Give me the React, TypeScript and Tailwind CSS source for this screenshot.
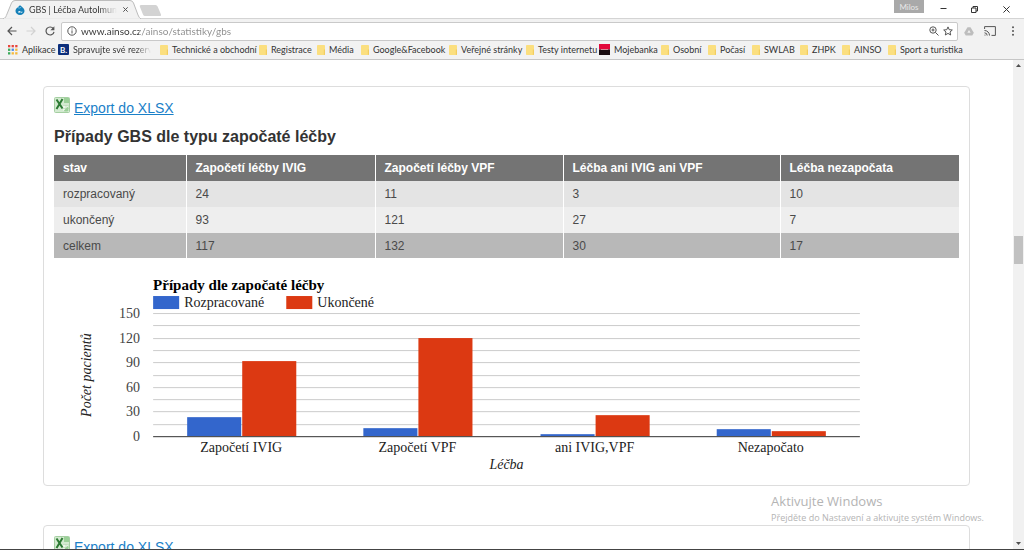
import React from "react";

const UI = "font-['Open_Sans','Noto_Sans',sans-serif]";
const BAR = "font-['Lato','Open_Sans',sans-serif]";

const bookmarks = [
  { label: "Aplikace", kind: "apps", width: "w-[50px]" },
  { label: "Spravujte své rezervace", kind: "booking", width: "w-[102px]" },
  { label: "Technické a obchodní", kind: "folder", width: "w-[99px]" },
  { label: "Registrace", kind: "folder", width: "w-[58px]" },
  { label: "Média", kind: "folder", width: "w-[44px]" },
  { label: "Google&Facebook", kind: "folder", width: "w-[88px]" },
  { label: "Veřejné stránky", kind: "folder", width: "w-[77px]" },
  { label: "Testy internetu", kind: "folder", width: "w-[73px]" },
  { label: "Mojebanka", kind: "bank", width: "w-[62px]" },
  { label: "Osobní", kind: "folder", width: "w-[47px]" },
  { label: "Počasí", kind: "folder", width: "w-[44px]" },
  { label: "SWLAB", kind: "folder", width: "w-[48px]" },
  { label: "ZHPK", kind: "folder", width: "w-[42px]" },
  { label: "AINSO", kind: "folder", width: "w-[46px]" },
  { label: "Sport a turistika", kind: "folder", width: "w-[80px]" },
];

function BookmarkIcon({ kind }: { kind: string }) {
  if (kind === "apps") {
    const colors = ["#e8453c", "#e8453c", "#e8453c", "#3cab5b", "#4a86e8", "#f5b93a", "#3cab5b", "#f5b93a", "#f5b93a"];
    return (
      <svg className="size-[10px] shrink-0" viewBox="0 0 10 10" aria-hidden="true">
        {colors.map((c, i) => (
          <rect key={i} x={(i % 3) * 3.6} y={Math.floor(i / 3) * 3.6} width="2.3" height="2.3" fill={c} />
        ))}
      </svg>
    );
  }
  if (kind === "booking") {
    return (
      <span className="flex size-[11px] shrink-0 items-center justify-center rounded-[1px] bg-[#0c2f7c] text-[8px] leading-none font-bold text-white">
        B.
      </span>
    );
  }
  if (kind === "bank") {
    return (
      <svg className="size-[11px] shrink-0" viewBox="0 0 11 11" aria-hidden="true">
        <rect width="11" height="5.5" fill="#e2093b" />
        <rect y="5.5" width="11" height="5.5" fill="#1a0d10" />
        <rect x="2" y="5" width="7" height="1" fill="#d98a98" />
      </svg>
    );
  }
  return (
    <svg className="h-[10px] w-2 shrink-0" viewBox="0 0 8 10" aria-hidden="true">
      <rect width="8" height="10" rx="0.8" fill="#fbdf7f" />
      <path d="M6.8 4.5H8V9.2Q8 10 7.2 10H6.8Z" fill="#f2cd60" />
    </svg>
  );
}

function Browser() {
  return (
    <header className={`shrink-0 text-[#333] ${BAR}`}>
      <div className="flex h-[19px] items-start justify-between border-b border-[#d4d4d4] bg-white">
        <div className="flex items-start">
          <div className="relative -mb-px ml-[3px] flex h-[19px] w-[138px] items-center pr-[10px] pl-3">
            <svg className="absolute inset-0 size-full" viewBox="0 0 138 19" preserveAspectRatio="none" aria-hidden="true">
              <path d="M0 19C3 18 3 16 4 14L8.500 3Q9.500 0.500 12 0.500H127Q129.500 0.500 130.500 3L135 15Q136 18 138 19Z" fill="#f2f2f2" stroke="#bcbcbc" strokeWidth="1" />
              <path d="M1 19H137" stroke="#f2f2f2" strokeWidth="1.500" />
            </svg>
            <svg className="relative mt-px size-[10px] shrink-0" viewBox="0 0 10 10" aria-hidden="true">
              <path d="M5 0C5.500 1.300 9.500 2.500 9.500 6A4.500 4 0 0 1 .5 6C.5 3 4 2 5 0Z" fill="#1580b8" />
              <path d="M3.500 6.200C5 5.400 5.500 7.400 7.600 6.600C7.500 8.400 6 7.800 5.300 7.300C4 8.300 2.700 7.600 3.500 6.200Z" fill="#e6f3fa" />
              <path d="M3 2.700Q4.300 3.700 6.200 2.300" stroke="#6bb8df" fill="none" />
            </svg>
            <span className="relative ml-1 w-[88px] overflow-hidden bg-linear-to-r from-[#333] from-80% to-transparent bg-clip-text text-[9px] leading-3 whitespace-nowrap text-transparent">
              GBS | Léčba AutoImunitních
            </span>
            <button aria-label="Zavřít kartu" className="relative ml-[6px] shrink-0">
              <svg className="size-[5px]" viewBox="0 0 5 5"><path d="M.3.3L4.700 4.700M4.700.3L.3 4.700" stroke="#555" /></svg>
            </button>
          </div>
          <button aria-label="Nová karta" className="mt-[5px] -ml-[2px]">
            <svg className="block h-[11px] w-[23px]" viewBox="0 0 23 11">
              <path d="M2 0H16.500Q18 0 18.600 1.500L22 9.500Q22.500 11 21 11H6Q4.600 11 4 9.500L.8 1.500Q.4 0 2 0Z" fill="#d3d3d3" />
            </svg>
          </button>
        </div>
        <div className="flex items-start">
          <button className="h-[13px] w-[30px] bg-[#a9a9a9] text-[8px] leading-3 text-[#e8e8e8]">Milos</button>
          <button aria-label="Minimalizovat" className="mt-[6px] ml-4">
            <svg className="block size-[7px]" viewBox="0 0 7 7"><path d="M.5 2.500H6.500" stroke="#333" /></svg>
          </button>
          <button aria-label="Obnovit" className="mt-[6px] ml-6">
            <svg className="block size-[7px]" viewBox="0 0 7 7" fill="none" stroke="#333"><path d="M.5 2H5V6.500H.5ZM2 2V.5H6.500V5H5" /></svg>
          </button>
          <button aria-label="Zavřít" className="mt-[6px] mr-[14px] ml-[25px]">
            <svg className="block size-[7px]" viewBox="0 0 7 7"><path d="M.4.4L6.600 6.600M6.600.4L.4 6.600" stroke="#333" /></svg>
          </button>
        </div>
      </div>

      <div className="flex h-[23px] items-center bg-[#f2f2f2] pt-px pr-[9px] pl-[7px]">
        <button aria-label="Zpět">
          <svg className="block size-[10px]" viewBox="0 0 10 10" fill="none" stroke="#555" strokeWidth="1.200"><path d="M9.500 5H1.200M5 1L1 5L5 9" /></svg>
        </button>
        <button aria-label="Vpřed" className="ml-[9px]">
          <svg className="block size-[10px]" viewBox="0 0 10 10" fill="none" stroke="#d2d2d2" strokeWidth="1.200"><path d="M.5 5H8.800M5 1L9 5L5 9" /></svg>
        </button>
        <button aria-label="Obnovit stránku" className="mr-[6px] ml-[9px]">
          <svg className="block size-[10px]" viewBox="0 0 10 10" fill="none" stroke="#555" strokeWidth="1.200"><path d="M8.300 2.600A4 4 0 1 0 9 5.800" /><path d="M9.400.3V4.300H5.400Z" fill="#555" stroke="none" /></svg>
        </button>
        <div className="flex h-[19px] min-w-0 flex-1 items-center rounded-[2px] border border-[#c9c9c9] bg-white pr-1 pl-[5px]">
          <svg className="size-[10px] shrink-0" viewBox="0 0 10 10" fill="none" stroke="#555" aria-hidden="true"><circle cx="5" cy="5" r="4.200" /><path d="M5 4.400V7.500M5 2.500V3.500" /></svg>
          <input
            aria-label="Adresa"
            readOnly
            value="www.ainso.cz/ainso/statistiky/gbs"
            className="ml-1 h-4 min-w-0 flex-1 bg-linear-to-r from-[#333] from-[58px] to-[#8c8c8c] to-[58px] bg-clip-text text-[10px] leading-4 text-transparent outline-none"
          />
          <button aria-label="Lupa">
            <svg className="block size-[10px]" viewBox="0 0 10 10" fill="none" stroke="#555"><circle cx="4" cy="4" r="3.200" /><path d="M6.400 6.400L9.500 9.500M2.500 4H5.500M4 2.500V5.500" /></svg>
          </button>
          <button aria-label="Přidat záložku" className="ml-1">
            <svg className="block size-[10px]" viewBox="0 0 10 10" fill="none" stroke="#555"><path d="M5 .9L6.200 3.700L9.300 4L7 6L7.700 9L5 7.400L2.300 9L3 6L.7 4L3.800 3.700Z" /></svg>
          </button>
        </div>
        <button aria-label="Disk" className="ml-[6px]">
          <svg className="block h-[9px] w-[10px]" viewBox="0 0 10 9"><path d="M3.500.3H6.500L9.800 5.800L8.300 8.500H1.700L.2 5.800Z" fill="#bdbdbd" /><path d="M5 3L6.600 5.800H3.400Z" fill="#f2f2f2" /></svg>
        </button>
        <button aria-label="Odeslat" className="ml-[10px]">
          <svg className="block h-[10px] w-3" viewBox="0 0 12 10" fill="none" stroke="#555"><path d="M.6 3V.6H11.400V9.400H7.500M.5 4.500A5 5 0 0 1 5.500 9.500M.5 6.800A2.800 2.800 0 0 1 3.200 9.500" /><circle cx="1" cy="9" r=".6" fill="#555" stroke="none" /></svg>
        </button>
        <button aria-label="Nabídka" className="ml-auto pl-[15px]">
          <svg className="block h-[10px] w-1" viewBox="0 0 4 10" fill="#555"><circle cx="2" cy="1.300" r="1" /><circle cx="2" cy="5" r="1" /><circle cx="2" cy="8.700" r="1" /></svg>
        </button>
      </div>

      <nav className="flex h-[18px] items-center overflow-hidden border-b border-[#c6c6c6] bg-[#f2f2f2] pb-[2px] pl-2">
        {bookmarks.map((b) => (
          <a key={b.label} href="#" className={`flex shrink-0 items-center whitespace-nowrap ${b.width}`}>
            <BookmarkIcon kind={b.kind} />
            <span className={b.kind === "booking"
              ? "ml-1 w-[78px] overflow-hidden bg-linear-to-r from-[#333] from-80% to-transparent bg-clip-text text-[9px] leading-3 text-transparent"
              : "ml-1 text-[9px] leading-3"}>
              {b.label}
            </span>
          </a>
        ))}
      </nav>
    </header>
  );
}

function ExportLink() {
  return (
    <a href="#" className="flex h-[22px] items-start text-[14px] leading-[22px] text-[#1a80c8]">
      <svg className="mr-1 size-4 shrink-0" viewBox="0 0 16 16" aria-hidden="true">
        <rect x=".5" y=".5" width="15" height="15" rx="1" fill="#d3ead0" stroke="#a5cfa2" />
        <path d="M10 1H15V6H10Z" fill="#9bd098" />
        <path d="M9 8H15V15H9Z" fill="#eef7ec" />
        <path d="M9 8.500H15M9 11.500H15M12 8V15" stroke="#b5d9b2" strokeWidth=".7" />
        <path d="M2.500 2.500L8.500 11.500M8.500 2L2.500 12" stroke="#2c7a33" strokeWidth="2" />
        <path d="M9 14.500L14.500 9V14.500Z" fill="#9bd098" />
      </svg>
      <span className="underline">Export do XLSX</span>
    </a>
  );
}

const columns = ["stav", "Započetí léčby IVIG", "Započetí léčby VPF", "Léčba ani IVIG ani VPF", "Léčba nezapočata"];
const rows = [
  { cells: ["rozpracovaný", "24", "11", "3", "10"], tone: "bg-[#e4e4e4]" },
  { cells: ["ukončený", "93", "121", "27", "7"], tone: "bg-[#eeeeee]" },
  { cells: ["celkem", "117", "132", "30", "17"], tone: "bg-[#b8b8b8]" },
];

function StatsTable() {
  return (
    <table className="w-full table-fixed border-collapse text-left text-[12px] leading-4 text-[#4a4a4a]">
      <colgroup>
        <col className="w-[132px]" />
        <col className="w-[189px]" />
        <col className="w-[188px]" />
        <col className="w-[217px]" />
        <col />
      </colgroup>
      <thead>
        <tr className="h-[26px] bg-[#747474] text-white">
          {columns.map((c) => (
            <th key={c} scope="col" className="border-r border-white px-2 pl-[9px] last:border-r-0">{c}</th>
          ))}
        </tr>
      </thead>
      <tbody>
        {rows.map((r) => (
          <tr key={r.cells[0]} className={`h-[26px] last:h-[25px] ${r.tone}`}>
            {r.cells.map((c, i) => (
              <td key={i} className="border-r border-white px-2 pl-[9px] last:border-r-0">{c}</td>
            ))}
          </tr>
        ))}
      </tbody>
    </table>
  );
}

const series = [
  { label: "Započetí IVIG", values: [24, 93] },
  { label: "Započetí VPF", values: [11, 121] },
  { label: "ani IVIG,VPF", values: [3, 27] },
  { label: "Nezapočato", values: [10, 7] },
];
const fills = ["#3366cc", "#dc3912"];
const base = 168;
const scale = (v: number) => (v * 123) / 150;

function Chart() {
  return (
    <svg
      className="mt-[10px] block w-full font-['Georgia','Liberation_Serif',serif] text-[14px]"
      viewBox="0 0 904 207"
      role="img"
      aria-label="Případy dle započaté léčby"
    >
      <text x="99" y="22" className="text-[15px] font-bold" fill="#000">Případy dle započaté léčby</text>
      <rect x="99" y="28" width="26" height="13" fill="#3366cc" />
      <text x="130" y="39" fill="#222">Rozpracované</text>
      <rect x="232" y="28" width="26" height="13" fill="#dc3912" />
      <text x="263" y="39" fill="#222">Ukončené</text>
      {Array.from({ length: 10 }, (_, i) => (
        <rect key={i} x="99" y={Math.round(base - scale((i + 1) * 15))} width="706" height="1" fill="#ccc" />
      ))}
      {[0, 30, 60, 90, 120, 150].map((v) => (
        <text key={v} x="86" y={Math.round(base - scale(v)) + 5} textAnchor="end" fill="#444">{v}</text>
      ))}
      {series.map((s, i) => {
        const x = 133 + Math.floor(i * 176.5);
        return (
          <g key={s.label}>
            {s.values.map((v, j) => {
              const h = Math.round(scale(v - 1));
              return <rect key={j} x={x + j * 55} y={base - h} width="54" height={h} fill={fills[j]} />;
            })}
            <text x={x + 54} y="184" textAnchor="middle" fill="#222">{s.label}</text>
          </g>
        );
      })}
      <rect x="99" y={base} width="706" height="1" fill="#333" />
      <text x="452" y="201" textAnchor="middle" fontStyle="italic" fill="#222">Léčba</text>
      <text transform="translate(37 107) rotate(-90)" textAnchor="middle" fontStyle="italic" fill="#222">Počet pacientů</text>
    </svg>
  );
}

export default function App() {
  return (
    <div className="relative flex h-screen flex-col overflow-hidden border-b border-[#444] bg-white font-['Liberation_Sans',Arial,sans-serif]">
      <Browser />
      <div className="flex min-h-0 flex-1">
        <main className="flex min-w-0 flex-1 flex-col gap-[39px] overflow-hidden px-[43px] pt-[26px]">
          <section className="shrink-0 rounded border border-[#ddd] p-[10px]">
            <ExportLink />
            <h2 className="my-[6px] text-[16px] leading-6 font-bold text-[#333]">Případy GBS dle typu započaté léčby</h2>
            <StatsTable />
            <Chart />
          </section>
          <section className="shrink-0 rounded border border-[#ddd] p-[10px]">
            <ExportLink />
          </section>
        </main>
        <div className="flex w-[11px] shrink-0 flex-col items-center justify-between bg-[#f1f1f1] py-1" aria-hidden="true">
          <svg className="h-[3px] w-[5px]" viewBox="0 0 5 3"><path d="M0 3L2.500 0L5 3Z" fill="#505050" /></svg>
          <div className="mt-[169px] mb-auto h-[28px] w-[9px] bg-[#c1c1c1]" />
          <svg className="h-[3px] w-[5px]" viewBox="0 0 5 3"><path d="M0 0L2.500 3L5 0Z" fill="#505050" /></svg>
        </div>
      </div>
      <aside className={`pointer-events-none absolute right-10 bottom-6 text-[#b4b4b4] ${UI}`}>
        <p className="text-[13px] leading-5">Aktivujte Windows</p>
        <p className="text-[9px] leading-[14px]">Přejděte do Nastavení a aktivujte systém Windows.</p>
      </aside>
    </div>
  );
}
